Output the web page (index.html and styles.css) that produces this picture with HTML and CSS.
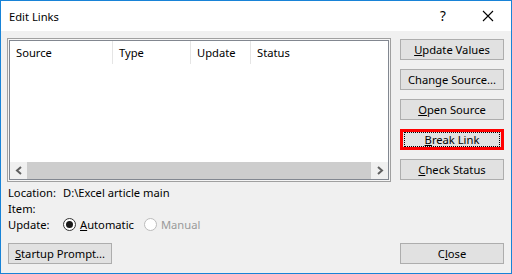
FILE: index.html
```html
<!DOCTYPE html>
<html lang="en">
<head>
    <meta charset="UTF-8">
    <title>Edit Links</title>
    <link rel="stylesheet" href="styles.css">
</head>
<body>
    <div class="window">
        <div class="titlebar">
            <span class="title">Edit Links</span>
            <span class="help">?</span>
            <span class="close-x">
                <svg width="12" height="12" viewBox="0 0 12 12">
                    <path d="M1 1 L11 11 M11 1 L1 11" stroke="#000" stroke-width="1.1" fill="none"/>
                </svg>
            </span>
        </div>

        <div class="content">
            <div class="top-row">
                <div class="list">
                    <div class="list-inner">
                        <div class="list-head">
                            <div class="col col-source">Source</div>
                            <div class="col col-type">Type</div>
                            <div class="col col-update">Update</div>
                            <div class="col col-status">Status</div>
                        </div>
                        <div class="list-body"></div>
                        <div class="hscroll">
                            <div class="arrow">
                                <svg width="8" height="9" viewBox="0 0 8 9"><path d="M6 1 L2 4.5 L6 8" stroke="#606060" stroke-width="2" fill="none"/></svg>
                            </div>
                            <div class="track"></div>
                            <div class="arrow">
                                <svg width="8" height="9" viewBox="0 0 8 9"><path d="M2 1 L6 4.5 L2 8" stroke="#606060" stroke-width="2" fill="none"/></svg>
                            </div>
                        </div>
                    </div>
                </div>

                <div class="side-buttons">
                    <div class="btn"><u>U</u>pdate Values</div>
                    <div class="btn">Chan<u>g</u>e Source...</div>
                    <div class="btn"><u>O</u>pen Source</div>
                    <div class="btn marked"><span class="focus"><u>B</u>reak Link</span></div>
                    <div class="btn"><u>C</u>heck Status</div>
                </div>
            </div>

            <div class="info">
                <div class="info-row">
                    <span class="label">Location:</span>
                    <span>D:\Excel article main</span>
                </div>
                <div class="info-row">
                    <span class="label">Item:</span>
                </div>
                <div class="info-row">
                    <span class="label">Update:</span>
                    <span class="radio checked"></span>
                    <span class="radio-text"><u>A</u>utomatic</span>
                    <span class="radio disabled"></span>
                    <span class="radio-text disabled-text">Manual</span>
                </div>
            </div>

            <div class="bottom-row">
                <div class="btn startup"><u>S</u>tartup Prompt...</div>
                <div class="btn"><span>C<u>l</u>ose</span></div>
            </div>
        </div>
    </div>
</body>
</html>
```

FILE: styles.css
```css
* {
    box-sizing: border-box;
}
body {
    margin: 0;
    font-family: "Noto Sans", "Open Sans", sans-serif;
    font-size: 11.2px;
    color: #000;
}
.window {
    width: 512px;
    height: 274px;
    border: 1px solid #1883d7;
    display: flex;
    flex-direction: column;
    background-color: #f0f0f0;
}
.titlebar {
    height: 30px;
    background-color: #fff;
    display: flex;
    align-items: center;
    padding-left: 8px;
}
.title {
    flex: 1;
}
.help {
    width: 20px;
    text-align: center;
    font-size: 13.5px;
    margin-right: 29px;
}
.close-x {
    width: 12px;
    height: 12px;
    margin-right: 17px;
    display: flex;
}
.content {
    flex: 1;
    display: flex;
    flex-direction: column;
    padding: 7px 7px 8px 6px;
}
.top-row {
    display: flex;
    gap: 9px;
}
.list {
    width: 384px;
    height: 144px;
    border: 1px solid #a0a0a0;
    padding: 1px;
    background-color: #f5f5f5;
}
.list-inner {
    height: 100%;
    border: 1px solid #828790;
    background-color: #fff;
    display: flex;
    flex-direction: column;
}
.list-head {
    display: flex;
    height: 23px;
}
.col {
    padding-left: 6px;
    line-height: 23px;
    border-right: 1px solid #e5e5e5;
}
.col-source {
    width: 103px;
}
.col-type {
    width: 78px;
}
.col-update {
    width: 60px;
}
.col-status {
    flex: 1;
    border-right: none;
}
.list-body {
    flex: 1;
}
.hscroll {
    height: 17px;
    display: flex;
    background-color: #f0f0f0;
}
.arrow {
    width: 17px;
    display: flex;
    align-items: center;
    justify-content: center;
}
.track {
    flex: 1;
    background-color: #cdcdcd;
}
.side-buttons {
    display: flex;
    flex-direction: column;
    gap: 9px;
    padding-top: 1px;
}
.btn {
    width: 104px;
    height: 21px;
    background-color: #e1e1e1;
    border: 1px solid #adadad;
    display: flex;
    align-items: center;
    justify-content: center;
}
.btn.marked {
    border: 3px solid #ff0000;
}
.focus {
    flex: 1;
    align-self: stretch;
    margin: 0 1px;
    border: 1px dotted #000;
    display: flex;
    align-items: center;
    justify-content: center;
}
.info {
    margin-top: 2px;
}
.info-row {
    display: flex;
    align-items: center;
    height: 16px;
}
.label {
    flex-shrink: 0;
    width: 56px;
    padding-left: 1px;
}
.radio {
    flex-shrink: 0;
    width: 13px;
    height: 13px;
    border-radius: 50%;
    border: 1px solid #333;
    background-color: #fff;
    margin-right: 4px;
    display: flex;
    align-items: center;
    justify-content: center;
}
.radio.checked::after {
    content: "";
    width: 7px;
    height: 7px;
    border-radius: 50%;
    background-color: #1a1a1a;
}
.radio.disabled {
    border-color: #bcbcbc;
}
.radio-text {
    margin-right: 10px;
}
.disabled-text {
    color: #9a9a9a;
}
.bottom-row {
    margin-top: auto;
    display: flex;
    justify-content: space-between;
    padding-left: 1px;
    padding-bottom: 1px;
}
```
